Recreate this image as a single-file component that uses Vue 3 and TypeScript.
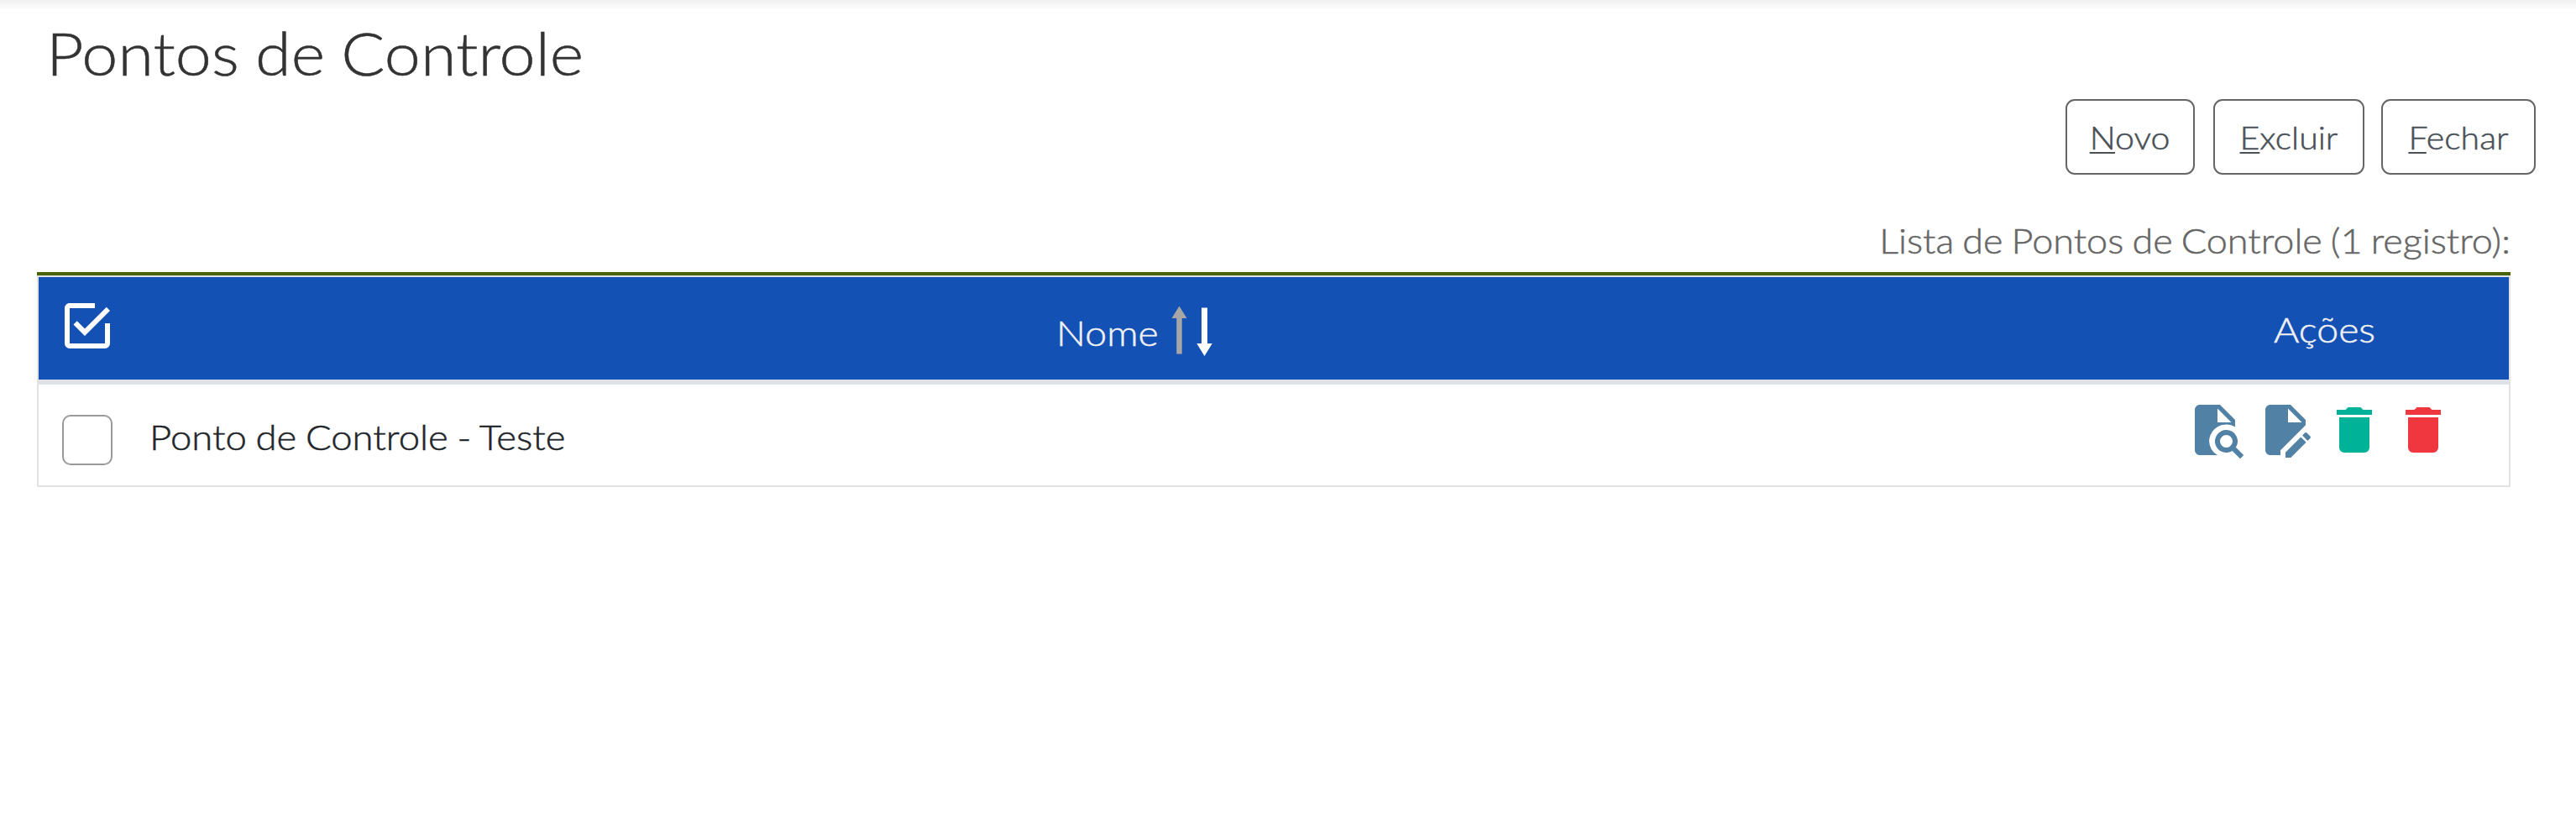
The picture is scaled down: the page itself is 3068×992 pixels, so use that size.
<script setup lang="ts">
interface Action {
  label: string
  color: string
  path: string
}

const buttons = [
  { key: 'N', rest: 'ovo', name: 'novo' },
  { key: 'E', rest: 'xcluir', name: 'excluir' },
  { key: 'F', rest: 'echar', name: 'fechar' },
]

const trash =
  'M19,4H15.5L14.5,3H9.5L8.5,4H5V6H19M6,19A2,2 0 0,0 8,21H16A2,2 0 0,0 18,19V7H6V19Z'

const actions: Action[] = [
  {
    label: 'Consultar',
    color: '#5181a5',
    path: 'M6 2C4.9 2 4 2.9 4 4V20C4 21.1 4.9 22 6 22H13A6.8 6.8 0 0 1 9.7 16.4A6.8 6.8 0 0 1 20 10.8V8L14 2H6M13 3.5L18.5 9H13V3.5M16.5 12A4.5 4.5 0 1 0 18.9 20.3L22 23.4L23.4 22L20.3 18.9A4.5 4.5 0 0 0 16.5 12M16.5 14A2.5 2.5 0 1 1 16.5 19A2.5 2.5 0 1 1 16.5 14Z',
  },
  {
    label: 'Alterar',
    color: '#5181a5',
    path: 'M6 2C4.9 2 4 2.9 4 4V20C4 21.1 4.9 22 6 22H10V20.1L20 10.1V8L14 2H6M13 3.5L18.5 9H13V3.5M20.1 13C20 13 19.8 13.1 19.7 13.2L18.7 14.2L20.8 16.3L21.8 15.3C22 15.1 22 14.7 21.8 14.5L20.5 13.2C20.4 13.1 20.3 13 20.1 13M18.1 14.8L12 20.9V23H14.1L20.2 16.9L18.1 14.8Z',
  },
  { label: 'Desativar', color: '#00b398', path: trash },
  { label: 'Excluir', color: '#f0373f', path: trash },
]
</script>

<template>
  <main class="page">
    <h1 class="title"><span class="wide">Pontos de Controle</span></h1>
    <div class="toolbar">
      <button v-for="b in buttons" :key="b.name" :class="['btn', b.name]" type="button">
        <span class="wide"><u>{{ b.key }}</u>{{ b.rest }}</span>
      </button>
    </div>
    <div class="caption"><span class="wide">Lista de Pontos de Controle (1 registro):</span></div>
    <section class="table">
      <header class="head">
        <svg class="icon check" viewBox="0 0 24 24">
          <path
            fill="#fff"
            d="M19,19H5V5H15V3H5C3.89,3 3,3.89 3,5V19A2,2 0 0,0 5,21H19A2,2 0 0,0 21,19V11H19M7.91,10.08L6.5,11.5L11,16L21,6L19.59,4.58L11,13.17L7.91,10.08Z"
          />
        </svg>
        <div class="name-head">
          <span class="nome"><span class="wide">Nome</span></span>
          <svg class="sort" viewBox="0 0 50 62">
            <path fill="#a6a6a6" d="M9.5 1.5L18.5 16H12.7V58.5H6.3V16H.5Z" />
            <path fill="#fff" d="M39.5 61L48.8 46H43V3.5H36V46H30.3Z" />
          </svg>
        </div>
        <span class="acoes"><span class="wide">Ações</span></span>
      </header>
      <div class="row">
        <span class="box"></span>
        <span class="row-name"><span class="wide">Ponto de Controle - Teste</span></span>
        <div class="actions">
          <svg v-for="a in actions" :key="a.label" class="icon" viewBox="0 0 24 24" :aria-label="a.label">
            <path :fill="a.color" fill-rule="evenodd" :d="a.path" />
          </svg>
        </div>
      </div>
    </section>
  </main>
</template>

<style>
body {
  margin: 0;
  background: #fff;
}
</style>

<style scoped>
.page {
  box-sizing: border-box;
  width: 3068px;
  height: 992px;
  padding: 18px 48px 0 44px;
  overflow: hidden;
  font-family: Lato, 'Open Sans', sans-serif;
  font-weight: 300;
  white-space: nowrap;
  background: linear-gradient(#efefef 0, #f8f8f8 6px, #fff 13px);
}
.wide {
  display: inline-block;
  transform: scaleX(1.085);
  transform-origin: left center;
  word-spacing: -1.5px;
  -webkit-text-stroke: 0.5px currentColor;
}
.title {
  margin: 0;
  padding-left: 11px;
  height: 100px;
  line-height: 90px;
  font-size: 70px;
  font-weight: 300;
  color: #333;
}
.title .wide {
  transform: scaleX(1.104);
}
.toolbar {
  display: flex;
  justify-content: flex-end;
  height: 90px;
}
.btn {
  box-sizing: border-box;
  height: 90px;
  padding: 2px 0 0;
  border: 2px solid #666;
  border-radius: 11px;
  background: #fff;
  font: inherit;
  font-size: 36.5px;
  line-height: 84px;
  color: #495057;
}
.btn .wide {
  transform: scaleX(1.125);
  transform-origin: center;
}
.btn u {
  text-decoration-thickness: 2px;
  text-underline-offset: 3px;
  text-decoration-skip-ink: none;
}
.novo {
  width: 154px;
}
.excluir {
  width: 180px;
  margin-left: 22px;
}
.fechar {
  width: 184px;
  margin-left: 20px;
}
.caption {
  width: 2946px;
  height: 116px;
  text-align: right;
  font-size: 42px;
  line-height: 156px;
  color: #666;
}
.caption .wide {
  transform: scaleX(1.071);
  transform-origin: right center;
  word-spacing: -2px;
}
.row-name .wide {
  transform: scaleX(1.082);
}
.table {
  box-sizing: border-box;
  width: 2946px;
  border: 2px solid #e2e2e2;
  border-top: 0;
}
.table::before {
  content: '';
  display: block;
  height: 4px;
  margin: 0 -2px;
  background: #4a6305;
  border-bottom: 2px solid #dee2e6;
}
.head {
  display: flex;
  height: 122px;
  background: #1451b4;
  border-bottom: 6px solid #dee2e6;
  color: #f0f0f0;
  font-size: 42px;
}
.icon {
  width: 72px;
  height: 72px;
  flex: none;
}
.check {
  margin: 22px 0 0 22px;
}
.name-head {
  display: flex;
  margin-left: 1118px;
  width: 1442px;
  line-height: 132px;
}
.nome {
  width: 137px;
}
.nome .wide,
.acoes .wide {
  transform: scaleX(1.105);
}
.sort {
  width: 50px;
  height: 62px;
  margin-top: 33px;
}
.acoes {
  line-height: 124px;
  margin-left: 8px;
}
.row {
  display: flex;
  height: 120px;
  font-size: 42px;
  color: #212529;
}
.box {
  box-sizing: border-box;
  width: 60px;
  height: 60px;
  margin: 36px 0 0 28px;
  border: 2px solid #999;
  border-radius: 10px;
}
.row-name {
  width: 2424px;
  margin-left: 44px;
  line-height: 124px;
}
.actions {
  display: flex;
  gap: 10px;
  padding-top: 18px;
}
.actions .icon:first-child {
  margin-right: 2px;
}
</style>
